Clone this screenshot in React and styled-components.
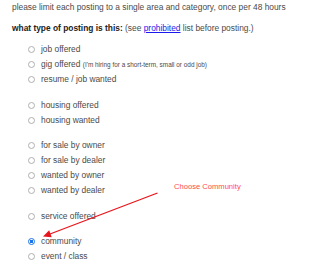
import React from "react";
import styled, { createGlobalStyle } from "styled-components";

const GlobalStyle = createGlobalStyle`
  html, body {
    margin: 0;
    padding: 0;
    background: #fff;
  }
  body {
    font-family: "Liberation Sans", Arial, sans-serif;
  }
`;

const Page = styled.div`
  position: relative;
  width: 300px;
  height: 275px;
  padding-left: 12px;
  box-sizing: border-box;
  overflow: hidden;
  color: #4a4a4a;
  font-size: 8.4px;
`;

const Intro = styled.p`
  margin: 0;
  line-height: 14px;
`;

const Question = styled.p`
  margin: 7px 0 0;
  line-height: 14px;
  b {
    color: #222;
  }
  a {
    color: #1a1aee;
    text-decoration: underline;
  }
`;

const Groups = styled.div`
  margin-top: 6.5px;
  padding-left: 16px;
`;

const Group = styled.ul`
  list-style: none;
  margin: 0;
  padding: 0;
  & + & {
    margin-top: 10.5px;
  }
`;

const Item = styled.li`
  display: flex;
  align-items: center;
  height: 15px;
  gap: 6px;
`;

const Radio = styled.span`
  flex: none;
  width: 7px;
  height: 7px;
  border-radius: 50%;
  box-sizing: border-box;
  border: 1px solid ${(p) => (p.$checked ? "#1a73e8" : "#b0b0b0")};
  background: ${(p) => (p.$checked ? "radial-gradient(circle, #1a73e8 0 1.6px, #fff 2px)" : "#fff")};
  margin-top: 1px;
`;

const Note = styled.small`
  font-size: 6.4px;
`;

const Callout = styled.span`
  position: absolute;
  left: 174px;
  top: 182px;
  font-size: 7.6px;
  line-height: 10px;
  color: #ff4d4d;
`;

const Overlay = styled.svg`
  position: absolute;
  left: 0;
  top: 0;
  pointer-events: none;
`;

const groups = [
  [
    { label: "job offered" },
    { label: "gig offered", note: "(I'm hiring for a short-term, small or odd job)" },
    { label: "resume / job wanted" },
  ],
  [{ label: "housing offered" }, { label: "housing wanted" }],
  [
    { label: "for sale by owner" },
    { label: "for sale by dealer" },
    { label: "wanted by owner" },
    { label: "wanted by dealer" },
  ],
  [{ label: "service offered" }],
  [{ label: "community", checked: true }, { label: "event / class" }],
];

export default function App() {
  return (
    <>
      <GlobalStyle />
      <Page>
        <Intro>please limit each posting to a single area and category, once per 48 hours</Intro>
        <Question>
          <b>what type of posting is this:</b> (see <a href="#">prohibited</a> list before posting.)
        </Question>
        <Groups>
          {groups.map((g, i) => (
            <Group key={i}>
              {g.map((item) => (
                <Item key={item.label}>
                  <Radio $checked={item.checked} />
                  <span>
                    {item.label}
                    {item.note && <> <Note>{item.note}</Note></>}
                  </span>
                </Item>
              ))}
            </Group>
          ))}
        </Groups>
        <Callout>Choose Community</Callout>
        <Overlay width="300" height="275" viewBox="0 0 300 275">
          <line x1="157.5" y1="193" x2="50" y2="234" stroke="#e8141b" strokeWidth="1.3" />
          <polygon points="43,236.5 51.7,237.2 49.2,230.3" fill="#e8141b" />
        </Overlay>
      </Page>
    </>
  );
}
